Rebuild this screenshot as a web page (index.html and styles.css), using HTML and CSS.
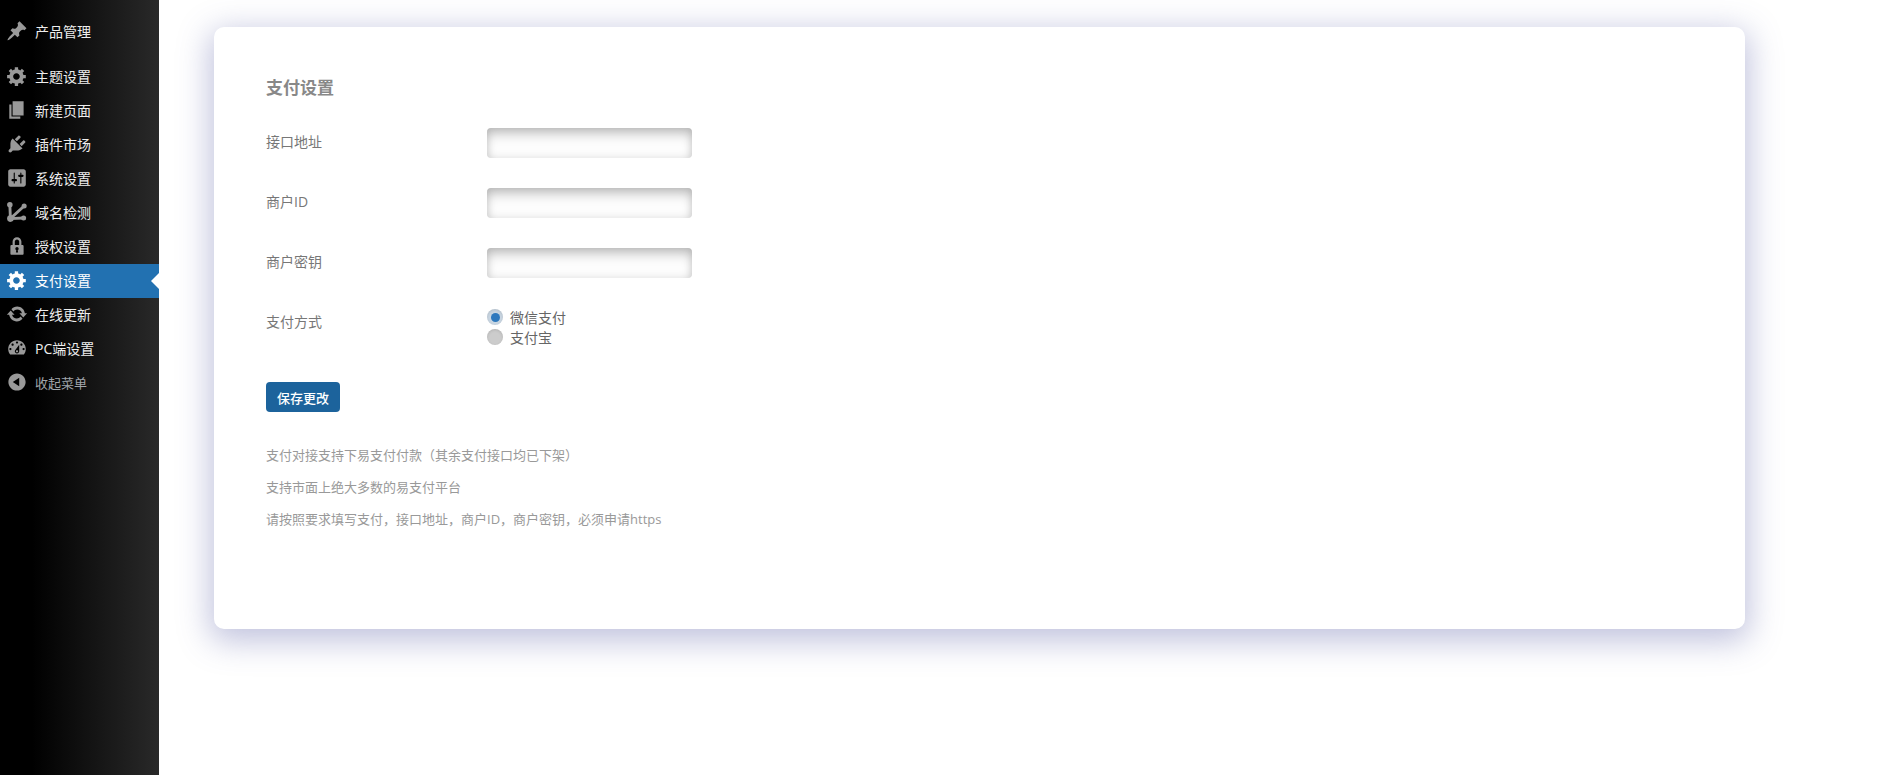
FILE: index.html
```html
<!DOCTYPE html>
<html lang="zh-CN">
<head>
    <meta charset="UTF-8">
    <title>支付设置</title>
    <link rel="stylesheet" href="styles.css">
</head>
<body>

<div class="sidebar">
    <a class="menu-item menu-first"><svg class="menu-icon" viewBox="0 0 20 20"><path d="M10.44 3.02l1.82-1.82 6.36 6.35-1.83 1.82c-1.05-.68-2.48-.57-3.41.36l-.75.75c-.92.93-1.04 2.35-.35 3.41l-1.83 1.82-2.41-2.41-2.8 2.79c-.42.42-3.38 2.71-3.8 2.29s1.86-3.39 2.28-3.81l2.79-2.79L4.1 9.36l1.83-1.82c1.05.69 2.48.57 3.4-.36l.75-.75c.93-.92 1.05-2.35.36-3.41z"/></svg>产品管理</a>
    <a class="menu-item"><svg class="menu-icon" viewBox="0 0 20 20"><path d="M18 12h-2.18c-.17.7-.44 1.35-.81 1.93l1.54 1.54-2.1 2.1-1.54-1.54c-.58.36-1.23.63-1.91.79V19H8v-2.18c-.68-.16-1.33-.43-1.91-.79l-1.54 1.54-2.12-2.12 1.54-1.54c-.36-.58-.63-1.23-.79-1.91H1V9.03h2.17c.16-.7.44-1.35.8-1.94L2.43 5.55l2.1-2.1 1.54 1.54c.58-.37 1.24-.64 1.93-.81V2h3v2.18c.68.16 1.33.43 1.91.79l1.54-1.54 2.12 2.12-1.54 1.54c.36.59.64 1.24.8 1.94H18V12zm-8.5 1.5c1.66 0 3-1.34 3-3s-1.34-3-3-3-3 1.34-3 3 1.34 3 3 3z"/></svg>主题设置</a>
    <a class="menu-item"><svg class="menu-icon" viewBox="0 0 20 20"><path d="M6 15V2h10v13H6zm-1 1h8v2H3V5h2v11z"/></svg>新建页面</a>
    <a class="menu-item"><svg class="menu-icon" viewBox="0 0 20 20"><path d="M13.11 4.36L9.87 7.6 8 5.73l3.24-3.24c.35-.34 1.05-.2 1.56.32.52.51.66 1.21.31 1.55zm-8 1.77l.91-1.12 9.01 9.01-1.19.84c-.71.71-2.63 1.16-3.82 1.16H6.14L4.9 17.26c-.59.59-1.54.59-2.12 0-.59-.58-.59-1.53 0-2.12l1.24-1.24v-3.88c0-1.13.4-3.19 1.09-3.89zm7.26 3.97l3.24-3.24c.34-.35 1.04-.21 1.55.31.52.51.66 1.21.31 1.55l-3.24 3.25z"/></svg>插件市场</a>
    <a class="menu-item"><svg class="menu-icon" viewBox="0 0 20 20"><path d="M18 16V4c0-1.1-.9-2-2-2H4c-1.1 0-2 .9-2 2v12c0 1.1.9 2 2 2h12c1.1 0 2-.9 2-2zM8 11h1c.55 0 1 .45 1 1s-.45 1-1 1H8v1.5c0 .28-.22.5-.5.5s-.5-.22-.5-.5V13H6c-.55 0-1-.45-1-1s.45-1 1-1h1V5.5c0-.28.22-.5.5-.5s.5.22.5.5V11zm5-2h-1c-.55 0-1-.45-1-1s.45-1 1-1h1V5.500c0-.28.22-.5.5-.5s.5.22.5.5V7h1c.55 0 1 .45 1 1s-.45 1-1 1h-1v5.5c0 .28-.22.5-.5.5s-.5-.22-.5-.5V9z"/></svg>系统设置</a>
    <a class="menu-item"><svg class="menu-icon" viewBox="0 0 20 20"><circle cx="3.500" cy="3.500" r="2.500"/><circle cx="16.500" cy="4.500" r="2.300"/><circle cx="4" cy="16" r="3"/><circle cx="16" cy="15.500" r="2.300"/><path class="menu-link" d="M3.500 3.500L4 16L16.500 4.500M4 16L16 15.500"/></svg>域名检测</a>
    <a class="menu-item"><svg class="menu-icon" viewBox="0 0 20 20"><path d="M14 9h1c.55 0 1 .45 1 1v7c0 .55-.45 1-1 1H5c-.55 0-1-.45-1-1v-7c0-.55.45-1 1-1h1V6c0-2.2 1.8-4 4-4s4 1.8 4 4v3zm-2 0V6c0-1.1-.9-2-2-2s-2 .9-2 2v3h4zm-1 7l-.36-2.15c.51-.24.86-.75.86-1.35 0-.83-.67-1.5-1.5-1.5s-1.5.67-1.5 1.5c0 .6.35 1.11.86 1.35L9 16h2z"/></svg>授权设置</a>
    <a class="menu-item active"><svg class="menu-icon" viewBox="0 0 20 20"><path d="M18 12h-2.18c-.17.7-.44 1.35-.81 1.93l1.54 1.54-2.1 2.1-1.54-1.54c-.58.36-1.23.63-1.91.79V19H8v-2.18c-.68-.16-1.33-.43-1.91-.79l-1.54 1.54-2.12-2.12 1.54-1.54c-.36-.58-.63-1.23-.79-1.91H1V9.03h2.17c.16-.7.44-1.35.8-1.94L2.43 5.55l2.1-2.1 1.54 1.54c.58-.37 1.24-.64 1.93-.81V2h3v2.18c.68.16 1.33.43 1.91.79l1.54-1.54 2.12 2.12-1.54 1.54c.36.59.64 1.24.8 1.94H18V12zm-8.5 1.5c1.66 0 3-1.34 3-3s-1.34-3-3-3-3 1.34-3 3 1.34 3 3 3z"/></svg>支付设置</a>
    <a class="menu-item"><svg class="menu-icon" viewBox="0 0 20 20"><path d="M10.2 3.28c3.53 0 6.43 2.61 6.92 6h2.08l-3.5 4-3.5-4h2.32c-.45-1.97-2.21-3.44-4.32-3.44-1.45 0-2.73.71-3.54 1.78L4.95 5.66C6.23 4.2 8.11 3.28 10.2 3.28zm-.4 13.44c-3.52 0-6.43-2.61-6.92-6H.8l3.5-4c1.17 1.33 2.33 2.67 3.5 4H5.48c.45 1.97 2.21 3.44 4.32 3.44 1.45 0 2.73-.71 3.54-1.78l1.71 1.95c-1.28 1.46-3.15 2.39-5.25 2.39z"/></svg>在线更新</a>
    <a class="menu-item"><svg class="menu-icon" viewBox="0 0 20 20"><path d="M3.76 16h12.48c1.1-1.37 1.76-3.11 1.76-5 0-4.42-3.58-8-8-8s-8 3.58-8 8c0 1.89.66 3.63 1.76 5zM10 4c.55 0 1 .45 1 1s-.45 1-1 1-1-.45-1-1 .45-1 1-1zM6 6c.55 0 1 .45 1 1s-.45 1-1 1-1-.45-1-1 .45-1 1-1zm8 0c.55 0 1 .45 1 1s-.45 1-1 1-1-.45-1-1 .45-1 1-1zm-5.37 5.55L12 7v6c0 1.1-.9 2-2 2s-2-.9-2-2c0-.57.24-1.08.63-1.45zM4 10c.55 0 1 .45 1 1s-.45 1-1 1-1-.45-1-1 .45-1 1-1zm12 0c.55 0 1 .45 1 1s-.45 1-1 1-1-.45-1-1 .45-1 1-1zm-5 3c0-.55-.45-1-1-1s-1 .45-1 1 .45 1 1 1 1-.45 1-1z"/></svg>PC端设置</a>
    <a class="menu-item menu-collapse"><svg class="menu-icon" viewBox="0 0 20 20"><path d="M10 2.16c4.33 0 7.84 3.51 7.84 7.84s-3.51 7.84-7.84 7.84S2.16 14.33 2.16 10 5.71 2.16 10 2.16zm2 11.72V6.12L6.18 9.97z"/></svg>收起菜单</a>
</div>

<div class="main">
    <div class="card">
        <h2>支付设置</h2>
        <div class="form-row">
            <label>接口地址</label>
            <input type="text">
        </div>
        <div class="form-row">
            <label>商户ID</label>
            <input type="text">
        </div>
        <div class="form-row">
            <label>商户密钥</label>
            <input type="text">
        </div>
        <div class="form-row radio-row">
            <label>支付方式</label>
            <div class="radio-group">
                <div class="radio-option"><span class="radio checked"></span>微信支付</div>
                <div class="radio-option"><span class="radio"></span>支付宝</div>
            </div>
        </div>
        <button class="save-btn">保存更改</button>
        <div class="notes">
            <p>支付对接支持下易支付付款（其余支付接口均已下架）</p>
            <p>支持市面上绝大多数的易支付平台</p>
            <p>请按照要求填写支付，接口地址，商户ID，商户密钥，必须申请https</p>
        </div>
    </div>
</div>

</body>
</html>
```

FILE: styles.css
```css
html, body {
    height: 100%;
}
body {
    margin: 0;
    display: flex;
    overflow: hidden;
    background-color: #fff;
    font-family: "Open Sans", "Noto Sans CJK SC", sans-serif;
    font-size: 14px;
}
.sidebar {
    width: 159px;
    flex-shrink: 0;
    padding-top: 15px;
    box-sizing: border-box;
    background: linear-gradient(to right, #000 20%, #292929 100%);
}
.menu-item {
    display: flex;
    align-items: center;
    height: 34px;
    box-sizing: border-box;
    padding: 0 0 2px 6px;
    color: #eee;
    position: relative;
}
.menu-first {
    margin-bottom: 11px;
}
.menu-icon {
    width: 22px;
    height: 22px;
    margin-right: 7px;
    fill: #999;
    flex-shrink: 0;
}
.menu-link {
    fill: none;
    stroke: #999;
    stroke-width: 2.6;
}
.menu-item.active {
    background-color: #2271b1;
    color: #fff;
}
.active .menu-icon {
    fill: #fff;
}
.active::after {
    content: "";
    position: absolute;
    right: 0;
    top: 9px;
    border: 8px solid transparent;
    border-right-color: #fff;
    border-left-width: 0;
}
.menu-collapse {
    color: #a0a5aa;
    font-size: 13px;
}
.main {
    flex: 1;
    padding: 27px 147px 0 55px;
}
.card {
    height: 602px;
    box-sizing: border-box;
    padding: 50px 52px 0;
    background-color: #fff;
    border-radius: 10px;
    box-shadow: 0 8px 32px 4px rgba(90, 95, 165, 0.38);
}
.card h2 {
    margin: 0 0 29px;
    font-size: 17px;
    line-height: 22px;
    font-weight: 700;
    color: #888;
}
.form-row {
    display: flex;
    height: 30px;
    margin-bottom: 30px;
}
.form-row label {
    width: 221px;
    line-height: 28px;
    color: #777;
    font-size: 14px;
}
.form-row input {
    width: 205px;
    height: 30px;
    box-sizing: border-box;
    border: none;
    border-radius: 4px;
    background-color: #fdfdfd;
    box-shadow: inset 0 8px 12px -2px rgba(0, 0, 0, 0.22), inset 0 0 8px rgba(0, 0, 0, 0.12);
}
.radio-row {
    height: 40px;
    margin-bottom: 34px;
}
.radio-option {
    display: flex;
    align-items: center;
    height: 20px;
    margin-top: -1px;
    margin-bottom: 1px;
    color: #666;
    font-size: 14px;
}
.radio {
    width: 16px;
    height: 16px;
    margin-right: 7px;
    border-radius: 50%;
    background-color: #ccc;
    box-shadow: inset 0 1px 3px rgba(0, 0, 0, 0.12);
    display: flex;
    align-items: center;
    justify-content: center;
}
.radio.checked {
    background-color: #c9d6e2;
}
.radio.checked::before {
    content: "";
    width: 9px;
    height: 9px;
    border-radius: 50%;
    background-color: #2d78bd;
}
.save-btn {
    display: block;
    width: 74px;
    height: 30px;
    padding: 0;
    border: none;
    border-radius: 4px;
    background-color: #1c639c;
    color: #fff;
    font-family: inherit;
    font-size: 13px;
    font-weight: 500;
}
.notes {
    margin-top: 27px;
}
.notes p {
    margin: 0;
    line-height: 32px;
    font-size: 13px;
    color: #999;
}
```
